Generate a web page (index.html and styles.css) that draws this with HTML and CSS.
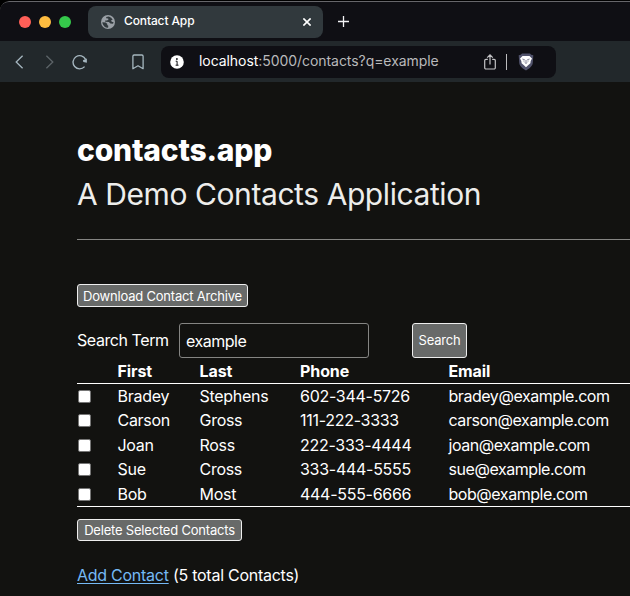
FILE: index.html
```html
<!DOCTYPE html>
<html lang="en">
<head>
<meta charset="utf-8">
<title>Contact App</title>
<link rel="stylesheet" href="styles.css">
</head>
<body>
<div class="window">
  <div class="tabstrip">
    <span class="light red"></span><span class="light yellow"></span><span class="light green"></span>
    <div class="tab">
      <svg class="globe" width="14" height="14" viewBox="0 0 14 14"><circle cx="7" cy="7" r="7" fill="#9aa0a6"/><path d="M7.8 1.4 5.2 1.9v1.4l2 .3.2 1.2-1.5.8H4.2v1.2l3.6.2 1.6 1.6 2.6.2.6-1.6-1.9-.4-.6-1.5 1.6-.6A5.7 5.7 0 0 0 7.8 1.4zM1.3 7.2l3.5.2 1.5 1.5-.1 1.2 1.1.7-.2 1.9A5.7 5.7 0 0 1 1.3 7.2z" fill="#31393d"/></svg>
      <span class="tab-title">Contact App</span>
      <svg class="close" width="8" height="8" viewBox="0 0 8 8"><path d="M.4.4 7.6 7.6M7.6.4.4 7.6" stroke="#fff" stroke-width="1.6"/></svg>
    </div>
    <svg class="plus" width="11" height="11" viewBox="0 0 11 11"><path d="M5.5 0v11M0 5.5h11" stroke="#f4f4f6" stroke-width="1.3"/></svg>
  </div>
  <div class="toolbar">
    <svg class="nav back" width="9" height="14" viewBox="0 0 9 14"><path d="M7.6.7 1.2 7l6.4 6.3" fill="none" stroke="#a5b6bf" stroke-width="1.3"/></svg>
    <svg class="nav forward" width="9" height="14" viewBox="0 0 9 14"><path d="M1.4.7 7.8 7l-6.4 6.3" fill="none" stroke="#5d6468" stroke-width="1.3"/></svg>
    <svg class="nav reload" width="16" height="16" viewBox="0 0 16 16"><path d="M12.6 12.6A6.6 6.6 0 1 1 13.6 5.400" fill="none" stroke="#a5b6bf" stroke-width="1.4"/><path d="M14.900 4.400v4.300l-3.600-.7-.4-1.700z" fill="#a5b6bf"/></svg>
    <svg class="nav bookmark" width="12" height="16" viewBox="0 0 12 16"><path d="M.9 14.7V2.2A1.2 1.2 0 0 1 2.1 1h7.8a1.2 1.2 0 0 1 1.2 1.2v12.5L6 11.8z" fill="none" stroke="#a5b6bf" stroke-width="1.3" stroke-linejoin="round"/></svg>
    <div class="address">
      <svg class="info" width="14" height="14" viewBox="0 0 14 14"><circle cx="7" cy="7" r="6.8" fill="#fff"/><path d="M5.700 6.200h1.400v4M5.600 10.200h2.900" stroke="#0f0f14" stroke-width="1" fill="none"/><circle cx="6.900" cy="4" r=".9" fill="#0f0f14"/></svg>
      <span class="url"><b>localhost</b>:5000/contacts?q=example</span>
      <svg class="share" width="12" height="16" viewBox="0 0 12 16"><path d="M3.8 5.3H1.9A1.2 1.2 0 0 0 .7 6.5v7.3A1.2 1.2 0 0 0 1.9 15h8.2a1.2 1.2 0 0 0 1.2-1.2V6.5a1.2 1.2 0 0 0-1.2-1.2H8.2M6 10.5V1M3.2 3.7 6 .9l2.8 2.8" fill="none" stroke="#c4c4c6" stroke-width="1.2"/></svg>
      <span class="divider"></span>
      <svg class="shield" width="16" height="18" viewBox="0 0 16 18"><path d="M4 .5h8l1.200 1.300 2.100.4-.5 7.800c-.4 3.300-3.700 5.600-6.800 7.600-3.100-2-6.400-4.300-6.800-7.600L.7 2.200l2.100-.4z" fill="#50526b"/><path d="M4.500 3h7l2.500 2.400-1.300 2.600-.3 2.300-2.300 1.900L8 14.300l-2.100-2.100-2.300-1.900L3.300 8 2 5.400z" fill="#fff"/><path d="m4.400 6 2.400.8M11.600 6l-2.400.8M8 7v2.500M6.600 9.300 8 10.500l1.400-1.200M5.400 8h1M9.600 8h1" fill="none" stroke="#50526b" stroke-width=".7"/></svg>
    </div>
  </div>
  <main class="page">
    <header>
      <h1>contacts.app</h1>
      <p class="subtitle">A Demo Contacts Application</p>
    </header>
    <button class="btn download">Download Contact Archive</button>
    <form class="search">
      <label for="q">Search Term</label>
      <input id="q" type="text" value="example">
      <button type="button" class="btn go">Search</button>
    </form>
    <table>
      <thead><tr><th class="c0"></th><th class="c1">First</th><th class="c2">Last</th><th class="c3">Phone</th><th>Email</th></tr></thead>
      <tbody>
        <tr><td><span class="check"></span></td><td>Bradey</td><td>Stephens</td><td>602-344-5726</td><td class="email">bradey@example.com</td></tr>
        <tr><td><span class="check"></span></td><td>Carson</td><td>Gross</td><td>111-222-3333</td><td class="email">carson@example.com</td></tr>
        <tr><td><span class="check"></span></td><td>Joan</td><td>Ross</td><td>222-333-4444</td><td class="email">joan@example.com</td></tr>
        <tr><td><span class="check"></span></td><td>Sue</td><td>Cross</td><td>333-444-5555</td><td class="email">sue@example.com</td></tr>
        <tr><td><span class="check"></span></td><td>Bob</td><td>Most</td><td>444-555-6666</td><td class="email">bob@example.com</td></tr>
      </tbody>
    </table>
    <button class="btn delete">Delete Selected Contacts</button>
    <p class="footer"><a href="#">Add Contact</a> <span>(5 total Contacts)</span></p>
  </main>
</div>
</body>
</html>
```
FILE: styles.css
```css
* { box-sizing: border-box; }
html, body { margin: 0; height: 596px; overflow: hidden; background: #000; }
body { font-family: Inter, "Liberation Sans", sans-serif; color: #fff; }
svg { display: block; flex: none; }
.window { margin-top: 1px; height: 595px; background: #121210; border-top-left-radius: 9px; overflow: hidden; }
.tabstrip { height: 40px; background: #0f0f14; border-top: 1px solid #66666a; border-top-left-radius: 9px; display: flex; align-items: center; padding-left: 19px; }
.light { width: 12px; height: 12px; border-radius: 50%; margin-right: 8px; flex: none; }
.red { background: #ff5f58; }
.yellow { background: #febc40; }
.green { background: #35c84b; }
.tab { width: 235px; height: 32px; margin-left: 9px; border-radius: 8px; background: #31393d; display: flex; align-items: center; padding: 0 12px 0 13px; }
.tab-title { margin-left: 9px; padding-bottom: 2px; font-size: 12px; font-weight: 500; letter-spacing: -0.12px; flex: 1; white-space: nowrap; }
.plus { margin-left: 15px; }
.toolbar { height: 41px; background: #22282b; display: flex; align-items: center; padding-left: 15px; }
.forward { margin-left: 21px; }
.reload { margin-left: 18px; }
.bookmark { margin-left: 44px; }
.address { width: 395px; height: 32px; margin-left: 17px; border-radius: 8px; background: #0f0f14; display: flex; align-items: center; padding-left: 9px; }
.url { margin-left: 15px; padding-bottom: 2px; width: 285px; font-size: 14px; letter-spacing: -0.06px; color: #b9b9bb; white-space: nowrap; }
.url b { font-weight: 400; color: #fff; }
.divider { width: 1px; height: 16px; margin: 0 11px 0 10px; background: #bcbcbe; }
.page { width: 760px; padding: 46px 0 0 77px; }
header { height: 112px; border-bottom: 1px solid #858583; }
h1 { margin: 0; font-size: 30px; line-height: 44px; font-weight: 800; letter-spacing: -0.2px; }
.subtitle { margin: 0; font-size: 30px; line-height: 45px; font-weight: 400; letter-spacing: -0.42px; color: #ededeb; white-space: nowrap; }
.btn { display: block; font: 400 13px/18px Inter, sans-serif; letter-spacing: -0.2px; color: #fff; background: #686a69; border: 1px solid #eee; border-radius: 3px; padding: 0; text-align: center; white-space: nowrap; }
.download { width: 171px; height: 23px; margin-top: 44px; }
.search { display: flex; align-items: center; height: 35px; margin: 16px 0 0; font-size: 16px; }
.search label { width: 102px; padding-bottom: 2px; letter-spacing: -0.43px; white-space: nowrap; }
.search input { width: 190px; height: 35px; border: 1px solid #858583; border-radius: 3px; background: #121210; color: #fff; font: 400 16px Inter, sans-serif; letter-spacing: -0.5px; padding: 0 6px; outline: 0; }
.go { width: 55px; height: 35px; margin-left: 43px; padding-bottom: 1px; }
table { width: 683px; border-collapse: separate; border-spacing: 0; table-layout: fixed; font-size: 16px; letter-spacing: -0.28px; border-bottom: 1px solid #fff; }
th, td { padding: 0; text-align: left; white-space: nowrap; height: 24px; line-height: 24px; }
tbody tr:nth-child(even) td { height: 25px; line-height: 25px; }
thead th { border-bottom: 1px solid #fff; height: 26px; font-weight: 700; letter-spacing: -0.1px; }
.c0 { width: 40.500px; }
.c1 { width: 82px; }
.c2 { width: 100.500px; }
.c3 { width: 148.500px; }
.email { letter-spacing: -0.45px; }
.check { display: block; width: 13px; height: 13px; margin-left: 1px; background: #fff; border: 1px solid #767676; border-radius: 2px; }
.delete { width: 165px; height: 22px; margin-top: 12px; }
.footer { margin: 22px 0 0; font-size: 16px; line-height: 24px; letter-spacing: -0.26px; }
.footer a { color: #75b9f5; text-underline-offset: 2px; }
```
